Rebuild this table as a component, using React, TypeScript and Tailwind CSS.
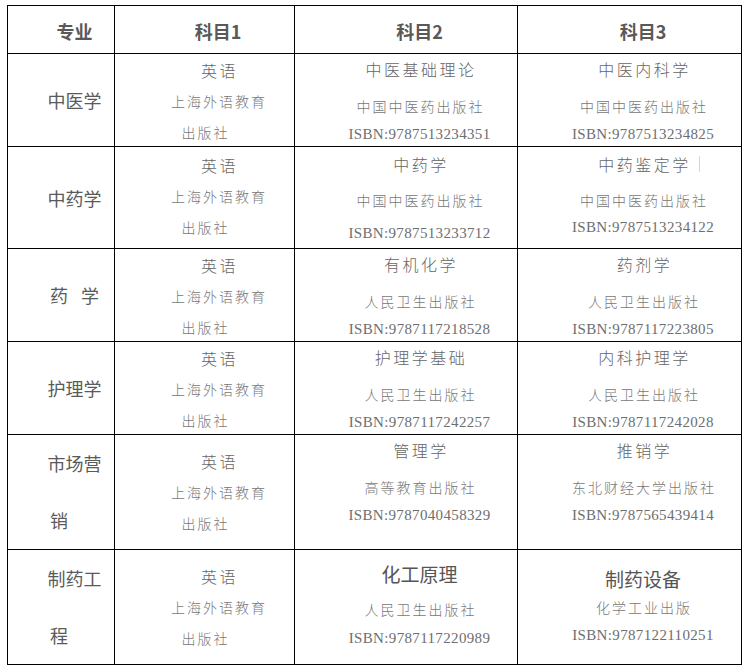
import type { ReactNode } from "react";

type Book = {
  title: string;
  pub: string;
  isbn: string;
  pt?: string;
  ph?: string;
  ih?: string;
  strong?: boolean;
  mark?: boolean;
};

type Row = {
  major: ReactNode;
  twoLine?: [string, string];
  pt: string;
  books: [Book, Book];
};

const cjk = "font-['Noto_Sans_CJK_SC',sans-serif]";

const rows: Row[] = [
  {
    major: "中医学",
    pt: "pt-0",
    books: [
      { title: "中医基础理论", pub: "中国中医药出版社", isbn: "9787513234351" },
      { title: "中医内科学", pub: "中国中医药出版社", isbn: "9787513234825" },
    ],
  },
  {
    major: "中药学",
    pt: "pt-[2px]",
    books: [
      {
        title: "中药学",
        pub: "中国中医药出版社",
        isbn: "9787513233712",
        pt: "pt-[2px]",
        ph: "h-[40px] leading-[40px]",
        ih: "h-[27px] leading-[27px]",
      },
      {
        title: "中药鉴定学",
        pub: "中国中医药出版社",
        isbn: "9787513234122",
        pt: "pt-[2px]",
        ph: "h-[40px] leading-[40px]",
        ih: "h-[15px] leading-[15px]",
        mark: true,
      },
    ],
  },
  {
    major: (
      <>
        药<span className="ml-[13px]">学</span>
      </>
    ),
    pt: "pt-0",
    books: [
      { title: "有机化学", pub: "人民卫生出版社", isbn: "9787117218528" },
      { title: "药剂学", pub: "人民卫生出版社", isbn: "9787117223805" },
    ],
  },
  {
    major: "护理学",
    pt: "pt-0",
    books: [
      { title: "护理学基础", pub: "人民卫生出版社", isbn: "9787117242257" },
      { title: "内科护理学", pub: "人民卫生出版社", isbn: "9787117242028" },
    ],
  },
  {
    major: null,
    twoLine: ["市场营", "销"],
    pt: "pt-[10px]",
    books: [
      { title: "管理学", pub: "高等教育出版社", isbn: "9787040458329" },
      { title: "推销学", pub: "东北财经大学出版社", isbn: "9787565439414" },
    ],
  },
  {
    major: null,
    twoLine: ["制药工", "程"],
    pt: "pt-[10px]",
    books: [
      {
        title: "化工原理",
        pub: "人民卫生出版社",
        isbn: "9787117220989",
        pt: "pt-[8px]",
        ph: "h-[41px] leading-[41px]",
        ih: "h-[16px] leading-[16px]",
        strong: true,
      },
      {
        title: "制药设备",
        pub: "化学工业出版",
        isbn: "9787122110251",
        pt: "pt-[13px]",
        ph: "h-[27px] leading-[27px]",
        ih: "h-[28px] leading-[28px]",
        strong: true,
      },
    ],
  },
];

function MajorCell({ row }: { row: Row }) {
  if (row.twoLine) {
    return (
      <div className="flex flex-col justify-center bg-white pl-[27px] text-[18px] text-[#5a5a5a]">
        <div className="h-[57px] text-center leading-[57px]">{row.twoLine[0]}</div>
        <div className="h-[57px] pl-[15px] text-left leading-[57px]">{row.twoLine[1]}</div>
      </div>
    );
  }
  return (
    <div className="flex flex-col justify-center bg-white pl-[27px] text-center text-[18px] text-[#5a5a5a]">
      <div className="leading-[30px]">{row.major}</div>
    </div>
  );
}

function EnglishCell({ pt }: { pt: string }) {
  return (
    <div className={`flex flex-col bg-white pl-[27px] text-center font-light ${pt}`}>
      <div className="h-[32px] pl-[3px] text-[16px] leading-[32px] tracking-[2.5px] text-[#666666]">
        英语
      </div>
      <div className="h-[31px] pl-[2px] text-[14px] leading-[31px] tracking-[2px] text-[#777777]">
        上海外语教育
      </div>
      <div className="h-[31px] pr-[27px] pl-[2px] text-[14px] leading-[31px] tracking-[2px] text-[#777777]">
        出版社
      </div>
    </div>
  );
}

function BookCell({ book }: { book: Book }) {
  const titleClass = book.strong
    ? "text-[19px] text-[#555555]"
    : "pl-[3px] text-[16px] font-light tracking-[2.5px] text-[#666666]";

  return (
    <div className={`flex flex-col bg-white pl-[27px] text-center ${book.pt ?? "pt-0"}`}>
      <div className={`h-[31px] leading-[31px] ${titleClass}`}>
        {book.mark ? (
          <span className="relative">
            {book.title}
            <span className="absolute top-1/2 -right-[9px] h-[16px] w-px -translate-y-1/2 bg-[#d6d6d6]" />
          </span>
        ) : (
          book.title
        )}
      </div>
      <div
        className={`${book.ph ?? "h-[42px] leading-[42px]"} pl-[2px] text-[14px] font-light tracking-[2px] text-[#777777]`}
      >
        {book.pub}
      </div>
      <div
        className={`${book.ih ?? "h-[14px] leading-[14px]"} font-['Liberation_Serif',serif] text-[15px] tracking-[0.35px] text-[#6e6e6e]`}
      >
        ISBN:{book.isbn}
      </div>
    </div>
  );
}

export default function App() {
  const headers = ["专业", "科目1", "科目2", "科目3"];

  return (
    <div className={`min-h-screen bg-white pt-[5px] pl-[7px] ${cjk}`}>
      <div className="grid w-fit grid-cols-[106px_179px_222px_223px] grid-rows-[47px_92px_101px_92px_92px_114px_114px] gap-px bg-black p-px">
        {headers.map((h) => (
          <div
            key={h}
            className="flex items-center justify-center bg-white pt-[3px] pl-[27px] text-[18px] font-bold text-[#595959]"
          >
            {h}
          </div>
        ))}
        {rows.map((row, i) => (
          <div key={i} className="contents">
            <MajorCell row={row} />
            <EnglishCell pt={row.pt} />
            <BookCell book={row.books[0]} />
            <BookCell book={row.books[1]} />
          </div>
        ))}
      </div>
    </div>
  );
}
